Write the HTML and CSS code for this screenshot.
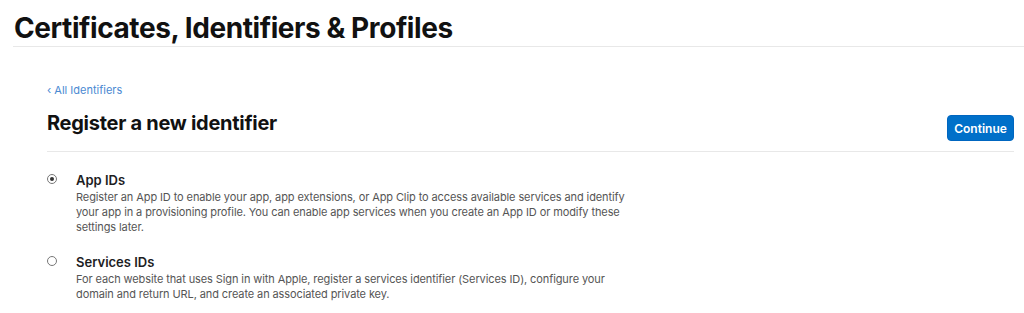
FILE: index.html
```html
<!DOCTYPE html>
<html lang="en">
<head>
<meta charset="utf-8">
<title>Certificates, Identifiers &amp; Profiles</title>
<link rel="stylesheet" href="styles.css">
</head>
<body>
<header class="page-header">
  <h1 class="page-title">Certificates, Identifiers &amp; Profiles</h1>
</header>
<main class="content">
  <a class="back-link" href="#">‹ All Identifiers</a>
  <div class="section-head">
    <h2 class="section-title">Register a new identifier</h2>
    <button class="btn-primary" type="button">Continue</button>
  </div>
  <ul class="options">
    <li class="option">
      <span class="radio checked"></span>
      <div class="option-body">
        <div class="option-title">App IDs</div>
        <p class="option-desc">Register an App ID to enable your app, app extensions, or App Clip to access available services and identify your app in a provisioning profile. You can enable app services when you create an App ID or modify these settings later.</p>
      </div>
    </li>
    <li class="option">
      <span class="radio"></span>
      <div class="option-body">
        <div class="option-title">Services IDs</div>
        <p class="option-desc">For each website that uses Sign in with Apple, register a services identifier (Services ID), configure your domain and return URL, and create an associated private key.</p>
      </div>
    </li>
  </ul>
</main>
</body>
</html>
```

FILE: styles.css
```css
* { box-sizing: border-box; }
html, body { margin: 0; padding: 0; background: #fff; }
body {
  font-family: Inter, "Noto Sans", "Liberation Sans", sans-serif;
  color: #1d1d1f;
  -webkit-font-smoothing: antialiased;
}
.page-header {
  margin-left: 13px;
  border-bottom: 1px solid #e8e8e8;
  height: 47px;
  padding-top: 11px;
}
.page-title {
  margin: 0 0 0 1px;
  font-size: 28px;
  line-height: 34px;
  font-weight: 700;
  letter-spacing: -0.42px;
  color: #111;
}
.content {
  padding: 36px 10px 0 47px;
}
.back-link {
  display: block;
  font-size: 11px;
  line-height: 14px;
  color: #4a8ad2;
  text-decoration: none;
}
.section-head {
  display: flex;
  align-items: flex-start;
  justify-content: space-between;
  border-bottom: 1px solid #e8e8e8;
  padding: 13px 0 10px;
}
.section-title {
  margin: 0;
  font-size: 20px;
  line-height: 26px;
  font-weight: 700;
  letter-spacing: -0.28px;
  color: #111;
}
.btn-primary {
  background: #0070c9;
  color: #fff;
  border: 1px solid #0066c0;
  border-radius: 4px;
  font-family: inherit;
  font-size: 12px;
  font-weight: 600;
  width: 67px;
  height: 26px;
  padding: 0;
  margin-top: 5px;
}
.options {
  list-style: none;
  margin: 0;
  padding: 19px 0 0 0;
}
.option {
  display: flex;
  margin-bottom: 18px;
}
.radio {
  flex: none;
  width: 10px;
  height: 10px;
  border: 1px solid #777;
  border-radius: 50%;
  margin: 3px 19px 0 0;
  position: relative;
  background: #fff;
}
.radio.checked::after {
  content: "";
  position: absolute;
  left: 2px;
  top: 2px;
  width: 4px;
  height: 4px;
  border-radius: 50%;
  background: #333;
}
.option-body { width: 560px; }
.option-title {
  font-size: 13px;
  line-height: 18px;
  font-weight: 600;
  color: #1d1d1f;
  margin-bottom: 1px;
}
.option-desc {
  margin: 0;
  font-size: 11px;
  line-height: 15px;
  letter-spacing: -0.1px;
  color: #555;
}
```
